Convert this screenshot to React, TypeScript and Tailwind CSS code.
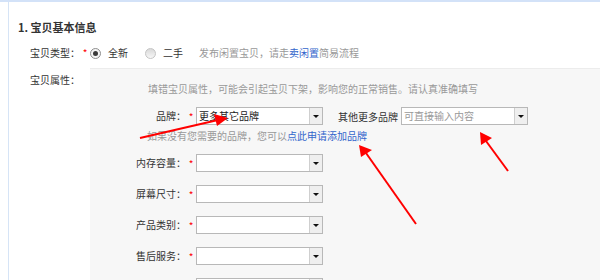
import React from 'react';

const font = { fontFamily: '"Noto Sans CJK SC", "Noto Sans", sans-serif' };

// little select box with the grey dropdown button on the right
function Select({ value, placeholder, width = 'w-[127px]' }: { value?: string; placeholder?: string; width?: string }) {
  return (
    <div className={`flex h-[18px] ${width} border border-[#b8b8b8] bg-white`}>
      <div className={`flex-1 overflow-hidden whitespace-nowrap px-[2px] text-[10px] leading-[16px] ${value ? 'text-[#222]' : 'text-[#999]'}`}>
        {value || placeholder}
      </div>
      <div className="flex w-[13px] items-center justify-center border-l border-[#cfcfcf] bg-[#efefef]">
        <div className="h-0 w-0 border-x-[3px] border-t-[3px] border-x-transparent border-t-[#111]" />
      </div>
    </div>
  );
}

function Star({ hidden }: { hidden?: boolean }) {
  return <span className="w-[10px] text-center text-[10px] text-[#f00]">{hidden ? '' : '*'}</span>;
}

function Radio({ checked }: { checked?: boolean }) {
  return (
    <span
      className={`flex h-[11px] w-[11px] items-center justify-center rounded-full border ${
        checked ? 'border-[#8f8f8f] bg-[#f4f4f4]' : 'border-[#c4c4c4] bg-gradient-to-b from-[#d9d9d9] to-[#f7f7f7]'
      }`}
    >
      {checked && <span className="h-[5px] w-[5px] rounded-full bg-[#3a3a3a]" />}
    </span>
  );
}

function FieldRow({ label, children, className = '' }: { label: string; children: React.ReactNode; className?: string }) {
  return (
    <div className={`flex items-center ${className}`}>
      <span className="w-[96px] text-right text-[10px] leading-[18px] text-[#333]">{label}</span>
      <Star hidden={!label} />
      {children}
    </div>
  );
}

const moreFields = ['内存容量：', '屏幕尺寸：', '产品类别：', '售后服务：', ''];

export default function App() {
  return (
    <div className="relative h-[280px] w-[600px] overflow-hidden bg-white" style={font}>
      <div className="h-full border-t-2 border-[#d3e2f8]">
        <div className="ml-[8px] h-full border-l border-[#d6e4f6]">
          <h2 className="pl-[9px] pt-[18px] text-[11px] font-bold leading-[14px] text-[#333]">1. 宝贝基本信息</h2>

          <div className="mt-[12px] flex items-center pl-[21px] text-[10px] leading-[14px] text-[#333]">
            <span>宝贝类型：</span>
            <span className="w-[10px] text-center text-[#f00]">*</span>
            <Radio checked />
            <span className="ml-[7px]">全新</span>
            <span className="ml-[17px]"><Radio /></span>
            <span className="ml-[7px]">二手</span>
            <span className="ml-[16px] text-[#999]">
              发布闲置宝贝，请走<span className="text-[#3366cc]">卖闲置</span>简易流程
            </span>
          </div>

          <div className="mt-[8px] flex">
            <span className="w-[81px] pl-[21px] pt-[5px] text-[10px] leading-[14px] text-[#333]">宝贝属性：</span>
            <div className="h-[220px] flex-1 border-t border-[#ececec] bg-[#f7f7f7]">
              <p className="pl-[58px] pt-[14px] text-[10px] leading-[12px] text-[#999]">
                填错宝贝属性，可能会引起宝贝下架，影响您的正常销售。请认真准确填写
              </p>

              <FieldRow label="品牌：" className="mt-[12px]">
                <Select value="更多其它品牌" />
                <span className="ml-[15px] mr-[3px] text-[10px] text-[#333]">其他更多品牌</span>
                <Select placeholder="可直接输入内容" />
              </FieldRow>

              <p className="mt-[5px] pl-[57px] text-[10px] leading-[12px] text-[#999]">
                如果没有您需要的品牌，您可以<span className="text-[#3366cc]">点此申请添加品牌</span>
              </p>

              {moreFields.map((label, i) => (
                <FieldRow key={i} label={label} className={i === 0 ? 'mt-[12px]' : 'mt-[13px]'}>
                  <Select />
                </FieldRow>
              ))}
            </div>
          </div>
        </div>
      </div>

      {/* red annotation arrows drawn over the form */}
      <svg className="pointer-events-none absolute left-0 top-0" width="600" height="280">
        <g stroke="#f00" strokeWidth="2" fill="#f00">
          <line x1="140" y1="138" x2="218" y2="120" />
          <polygon points="228,118 214,114 217,126" stroke="none" />
          <line x1="416" y1="224" x2="366" y2="153" />
          <polygon points="359,145 361,157 372,150" stroke="none" />
          <line x1="508" y1="171" x2="486" y2="141" />
          <polygon points="480,132 481,145 492,138" stroke="none" />
        </g>
      </svg>
    </div>
  );
}
